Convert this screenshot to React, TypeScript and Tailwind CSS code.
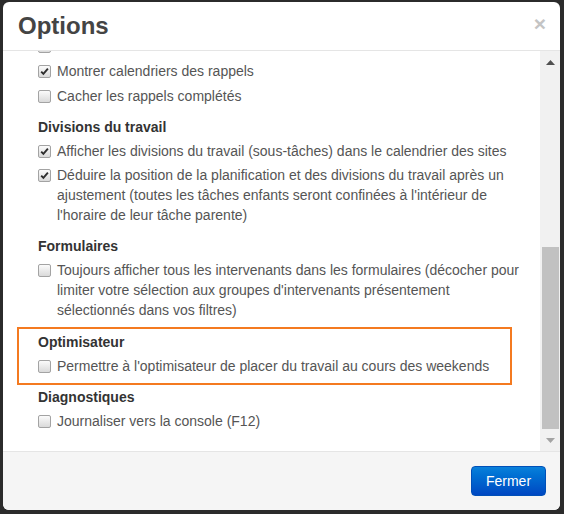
import type { ReactNode } from 'react'

function Box({ checked }: { checked?: boolean }) {
  return (
    <span className="mt-[4px] flex h-[13px] w-[13px] shrink-0 items-center justify-center rounded-[2px] border border-[#a3a3a3] bg-linear-to-b from-[#fbfbfb] to-[#dadada]">
      {checked && (
        <svg width="9" height="9" viewBox="0 0 9 9">
          <path d="M1.2 4.6 L3.4 6.9 L7.9 1.6" fill="none" stroke="#2f2f2f" strokeWidth="1.9" />
        </svg>
      )}
    </span>
  )
}

function Row({ checked, children }: { checked?: boolean; children?: ReactNode }) {
  return (
    <div className="flex gap-[6px] text-[14px] leading-[20px] text-[#555]">
      <Box checked={checked} />
      <span className="min-w-0 flex-1">{children}</span>
    </div>
  )
}

function Heading({ children }: { children: ReactNode }) {
  return <div className="mb-[4px] text-[14px] font-bold leading-[20px] text-[#333]">{children}</div>
}

export default function App() {
  return (
    <div className="h-[514px] w-[564px] bg-[#2b2b2b] pl-[3px] pt-[2px] font-['Liberation_Sans',Arial,sans-serif]">
      <div className="flex h-[508px] w-[557px] flex-col overflow-hidden rounded-[6px] bg-white">
        <div className="flex h-[48px] shrink-0 items-center justify-between pl-[15px] pr-[14px]">
          <h4 className="text-[24px] font-bold leading-none text-[#444]">Options</h4>
          <span className="-mt-[6px] text-[21px] font-bold leading-none text-[#c4c4c4]">×</span>
        </div>
        <div className="flex h-[401px] shrink-0 border-t border-[#e5e5e5]">
          <div className="min-w-0 flex-1 overflow-hidden pl-[14px] pr-[15px]">
            <div className="-mt-[15px] ml-[21px] flex flex-col">
              <Row />
              <div className="mt-[8px]">
                <Row checked>Montrer calendriers des rappels</Row>
              </div>
              <div className="mt-[5px]">
                <Row>Cacher les rappels complétés</Row>
              </div>
            </div>

            <div className="ml-[21px] mt-[11px]">
              <Heading>Divisions du travail</Heading>
              <div className="flex flex-col gap-[4px]">
                <Row checked>Afficher les divisions du travail (sous-tâches) dans le calendrier des sites</Row>
                <Row checked>
                  Déduire la position de la planification et des divisions du travail après un ajustement
                  (toutes les tâches enfants seront confinées à l'intérieur de l'horaire de leur tâche parente)
                </Row>
              </div>
            </div>

            <div className="ml-[21px] mt-[11px]">
              <Heading>Formulaires</Heading>
              <Row>
                Toujours afficher tous les intervenants dans les formulaires (décocher pour limiter votre
                sélection aux groupes d'intervenants présentement sélectionnés dans vos filtres)
              </Row>
            </div>

            <div className="mt-[7px] w-[495px] border-2 border-[#f47a20] pb-[7px] pl-[19px] pt-[3px]">
              <Heading>Optimisateur</Heading>
              <Row>Permettre à l'optimisateur de placer du travail au cours des weekends</Row>
            </div>

            <div className="ml-[21px] mt-[2px]">
              <Heading>Diagnostiques</Heading>
              <Row>Journaliser vers la console (F12)</Row>
            </div>
          </div>

          <div className="flex w-[20px] shrink-0 flex-col bg-[#f1f1f1]">
            <div className="flex h-[23px] items-center justify-center">
              <svg width="9" height="5" viewBox="0 0 9 5">
                <path d="M0 5 L4.5 0 L9 5 Z" fill="#505050" />
              </svg>
            </div>
            <div className="h-[173px]" />
            <div className="ml-[2px] h-[182px] w-[17px] bg-[#c1c1c1]" />
            <div className="flex flex-1 items-center justify-center">
              <svg width="9" height="5" viewBox="0 0 9 5">
                <path d="M0 0 L9 0 L4.5 5 Z" fill="#a3a3a3" />
              </svg>
            </div>
          </div>
        </div>
        <div className="flex flex-1 items-center justify-end border-t border-[#e5e5e5] bg-[#f5f5f5] pr-[14px]">
          <button
            type="button"
            className="h-[30px] w-[75px] rounded-[4px] border border-[#0050b8] bg-linear-to-b from-[#0a80da] to-[#0047c2] text-[14px] text-white"
          >
            Fermer
          </button>
        </div>
      </div>
    </div>
  )
}
